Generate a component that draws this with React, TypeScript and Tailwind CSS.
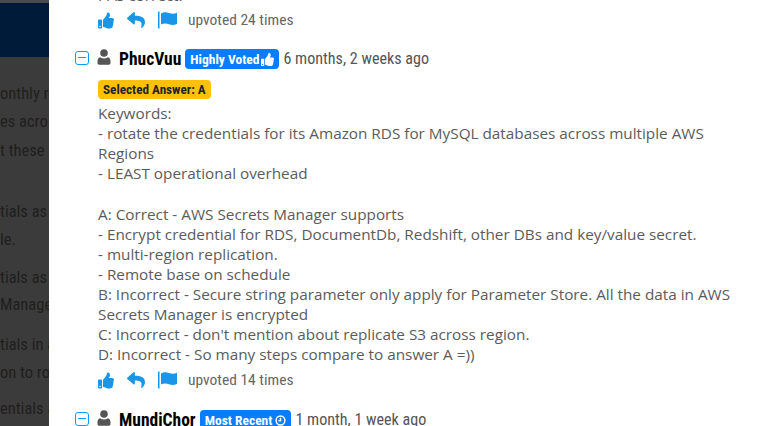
import type { ReactNode } from 'react'

const condensed = "[font-family:Roboto,'Liberation_Sans',sans-serif] [font-stretch:75%]"

function ThumbIcon({ className }: { className: string }) {
  return (
    <svg viewBox="0 0 512 512" className={className} fill="currentColor">
      <path d="M104 224H24c-13.300 0-24 10.700-24 24v240c0 13.300 10.700 24 24 24h80c13.300 0 24-10.700 24-24V248c0-13.300-10.700-24-24-24zM64 472c-13.300 0-24-10.700-24-24s10.700-24 24-24 24 10.700 24 24-10.700 24-24 24zM384 81.500c0 42.400-26 66.200-33.300 94.500h101.700c33.400 0 59.400 27.700 59.600 58 .1 17.900-7.500 37.200-19.400 49.200l-.1.100c9.800 23.300 8.200 56-9.300 79.400 8.700 25.900-.1 57.700-16.400 74.800 4.300 17.600 2.200 32.600-6.100 44.600C440.200 511.600 389.600 512 346.800 512h-2.800c-48.300 0-87.800-17.600-119.600-31.700-16-7.100-36.800-15.900-52.700-16.200-6.500-.1-11.800-5.500-11.800-12v-213.800c0-3.200 1.300-6.300 3.600-8.500 39.600-39.100 56.600-80.500 89.100-113 14.800-14.800 20.200-37.200 25.400-58.900C282.500 39.300 291.800 0 312 0c24 0 72 8 72 81.500z" />
    </svg>
  )
}

function ReplyIcon() {
  return (
    <svg viewBox="0 0 512 512" className="h-[18px] w-[18px]" fill="currentColor">
      <path d="M8.300 189.800 184.300 37.800C199.700 24.500 224 35.300 224 56v80.100C384.600 137.900 512 170.100 512 322.300c0 61.400-39.600 122.300-83.300 154.100-13.700 9.900-33.100-2.500-28.100-18.600 45.300-144.900-21.500-183.300-176.600-185.600V360c0 20.700-24.300 31.500-39.700 18.200l-176-152c-11.100-9.600-11.100-26.800 0-36.400z" />
    </svg>
  )
}

function FlagIcon() {
  return (
    <svg viewBox="0 0 20 18" className="h-[18px] w-[20px]" fill="currentColor">
      <rect x="0" y="0.500" width="1.500" height="17" />
      <path d="M3 2.500c2.500-1.600 5-1.600 8-.5s5.500 1.100 8-.2v11c-2.500 1.500-5.200 1.500-8 .4s-5.500-1.100-8 .3z" />
    </svg>
  )
}

function PersonIcon() {
  return (
    <svg viewBox="0 0 14 16" className="h-[16px] w-[14px] text-[#555555]" fill="currentColor">
      <circle cx="7" cy="4" r="3.800" />
      <path d="M3.200 8.300C1.200 8.800 0.500 10.500 0.500 12.500v1.500c0 1 .7 1.700 1.700 1.700h9.600c1 0 1.700-.7 1.700-1.700v-1.500c0-2-.7-3.700-2.700-4.200-1.100.8-2.300 1.200-3.800 1.200s-2.700-.4-3.800-1.200z" />
    </svg>
  )
}

function Collapse() {
  return (
    <span className="flex h-[14px] w-[14px] items-center justify-center rounded-[3px] border border-[#0d9bf2]">
      <span className="h-px w-[8px] bg-[#0d9bf2]" />
    </span>
  )
}

function Actions({ votes }: { votes: number }) {
  return (
    <div className="flex h-[20px] items-center text-[#1a96e6]">
      <ThumbIcon className="h-[17px] w-[16px]" />
      <span className="ml-[13px]"><ReplyIcon /></span>
      <span className="ml-[13px]"><FlagIcon /></span>
      <span className={`ml-[10px] text-[15.500px] text-[#666666] ${condensed}`}>upvoted {votes} times</span>
    </div>
  )
}

function CommentHead({ name, badge, when }: { name: string; badge: ReactNode; when: string }) {
  return (
    <div className="-ml-[23px] flex h-[22px] items-center">
      <span className="-mt-[3px]"><Collapse /></span>
      <span className="ml-[8px] -mt-[4px]"><PersonIcon /></span>
      <span className={`ml-[8px] text-[17.500px] font-bold text-black ${condensed}`}>{name}</span>
      {badge}
      <span className={`ml-[4px] text-[16.100px] text-[#555555] ${condensed}`}>{when}</span>
    </div>
  )
}

const backLines = [
  { text: 'onthly r', top: 'mt-[26px]' },
  { text: 'es acro', top: 'mt-[7px]' },
  { text: 't these', top: 'mt-[8px]' },
  { text: 'tials as', top: 'mt-[40px]' },
  { text: 'le.', top: 'mt-[7px]' },
  { text: 'tials as', top: 'mt-[17px]' },
  { text: 'Manage', top: 'mt-[6px]' },
  { text: 'tials in a', top: 'mt-[19px]' },
  { text: 'on to ro', top: 'mt-[7px]' },
  { text: 'entials a', top: 'mt-[15px]' },
]

export default function App() {
  return (
    <div className="flex h-[426px] w-[783px] overflow-hidden bg-white">
      {/* dimmed page behind the modal */}
      <div className="flex h-full w-[49px] shrink-0 flex-col overflow-hidden bg-[#3b3b3b]">
        <div className="h-[3px] bg-[#4a4a4a]" />
        <div className="h-[54px] bg-[#001b3a]" />
        <div className={`whitespace-nowrap text-[16.500px] leading-[21px] text-[#1f1f1f] ${condensed}`}>
          {backLines.map((l, i) => (
            <div key={i} className={l.top}>
              {l.text}
            </div>
          ))}
        </div>
      </div>

      <div className="min-w-0 flex-1 pl-[49px] pr-[20px] text-[15.300px] leading-[20.100px] text-[#5b5b5b] [font-family:'Open_Sans',sans-serif]">
        <div className="-mt-[15px]">PAs correct.</div>
        <div className="mt-[5px]"><Actions votes={24} /></div>

        <div className="mt-[18px]">
          <CommentHead
            name="PhucVuu"
            when="6 months, 2 weeks ago"
            badge={
              <span className={`ml-[4px] flex h-[20px] items-center gap-[2px] rounded-[4px] bg-[#0a7cff] px-[5px] text-[13.500px] font-bold text-white ${condensed}`}>
                Highly Voted <ThumbIcon className="h-[13px] w-[13px]" />
              </span>
            }
          />
          <div className={`mt-[10px] flex h-[19px] w-fit items-center rounded-[4px] bg-[#ffc107] px-[5px] text-[13.200px] font-bold text-[#212529] ${condensed}`}>
            Selected Answer: A
          </div>
          <div className="mt-[4px] w-[640px]">
            <div>Keywords:</div>
            <div>- rotate the credentials for its Amazon RDS for MySQL databases across multiple AWS Regions</div>
            <div>- LEAST operational overhead</div>
            <div className="h-[20.100px]" />
            <div>A: Correct - AWS Secrets Manager supports</div>
            <div>- Encrypt credential for RDS, DocumentDb, Redshift, other DBs and key/value secret.</div>
            <div>- multi-region replication.</div>
            <div>- Remote base on schedule</div>
            <div>B: Incorrect - Secure string parameter only apply for Parameter Store. All the data in AWS Secrets Manager is encrypted</div>
            <div>C: Incorrect - don't mention about replicate S3 across region.</div>
            <div>D: Incorrect - So many steps compare to answer A =))</div>
          </div>
          <div className="mt-[6px]"><Actions votes={14} /></div>
        </div>

        <div className="mt-[19px]">
          <CommentHead
            name="MundiChor"
            when="1 month, 1 week ago"
            badge={
              <span className={`ml-[4px] flex h-[20px] items-center gap-[3px] rounded-[4px] bg-[#0a7cff] px-[5px] text-[13.500px] font-bold text-white ${condensed}`}>
                Most Recent
                <svg viewBox="0 0 12 12" className="h-[11px] w-[11px]" fill="none" stroke="currentColor" strokeWidth="1.600">
                  <circle cx="6" cy="6" r="4.800" />
                  <path d="M6 3v3.300H3.800" />
                </svg>
              </span>
            }
          />
        </div>
      </div>
    </div>
  )
}
